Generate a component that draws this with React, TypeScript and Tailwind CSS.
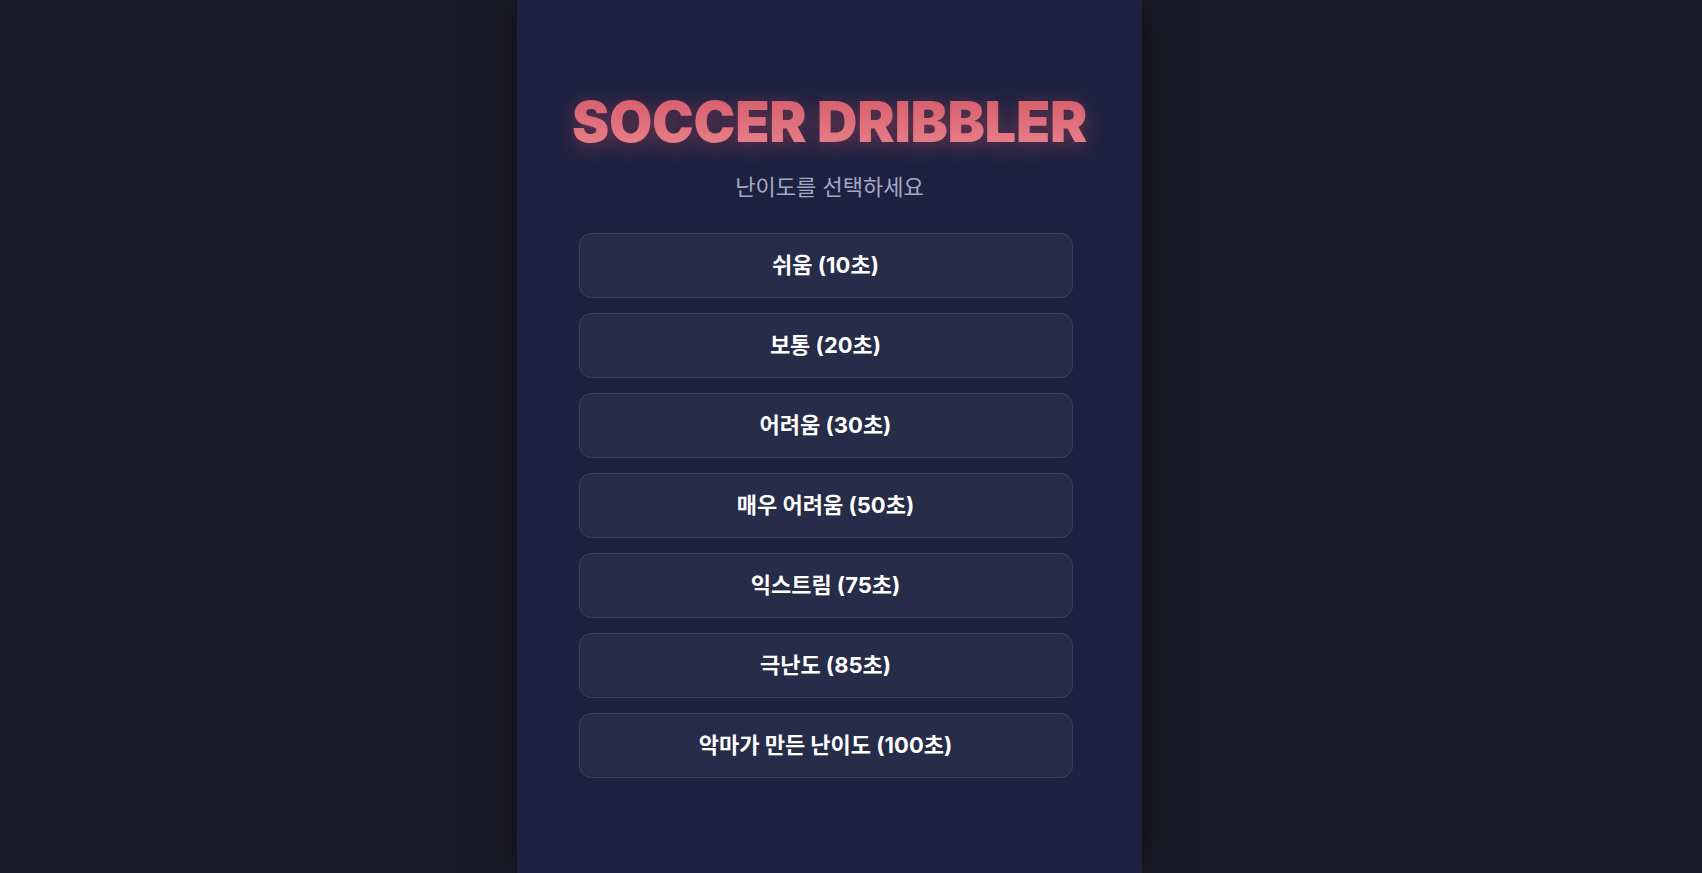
import React from "react";

const levels = [
  { name: "쉬움", sec: 10 },
  { name: "보통", sec: 20 },
  { name: "어려움", sec: 30 },
  { name: "매우 어려움", sec: 50 },
  { name: "익스트림", sec: 75 },
  { name: "극난도", sec: 85 },
  { name: "악마가 만든 난이도", sec: 100 },
];

export default function App() {
  return (
    <div
      className="min-h-screen h-[873px] overflow-hidden bg-[#1b1a29] flex"
      style={{ fontFamily: "Inter, 'Noto Sans CJK KR', sans-serif" }}
    >
      <div className="ml-[517px] w-[625px] h-full bg-gradient-to-b from-[#1e2140] to-[#1c2240] shadow-[0_0_40px_rgba(0,0,0,0.55)] flex flex-col items-center pt-[88px]">
        <h1 className="text-[56px] leading-[68px] font-black tracking-[-0.3px] bg-gradient-to-b from-[#d45769] to-[#e9868d] bg-clip-text text-transparent drop-shadow-[0_4px_10px_rgba(225,85,105,0.4)]">
          SOCCER DRIBBLER
        </h1>
        <p className="mt-[16px] text-[22px] leading-[30px] text-[#a3a8c8]">
          난이도를 선택하세요
        </p>
        <div className="mt-[31px] w-[494px] -translate-x-[4px] flex flex-col gap-[15px]">
          {levels.map((l) => (
            <button
              key={l.sec}
              className="h-[65px] w-full rounded-[12px] border border-[#3b405f] bg-[#272c48] text-white text-[22px] font-bold"
            >
              {l.name} ({l.sec}초)
            </button>
          ))}
        </div>
      </div>
    </div>
  );
}
